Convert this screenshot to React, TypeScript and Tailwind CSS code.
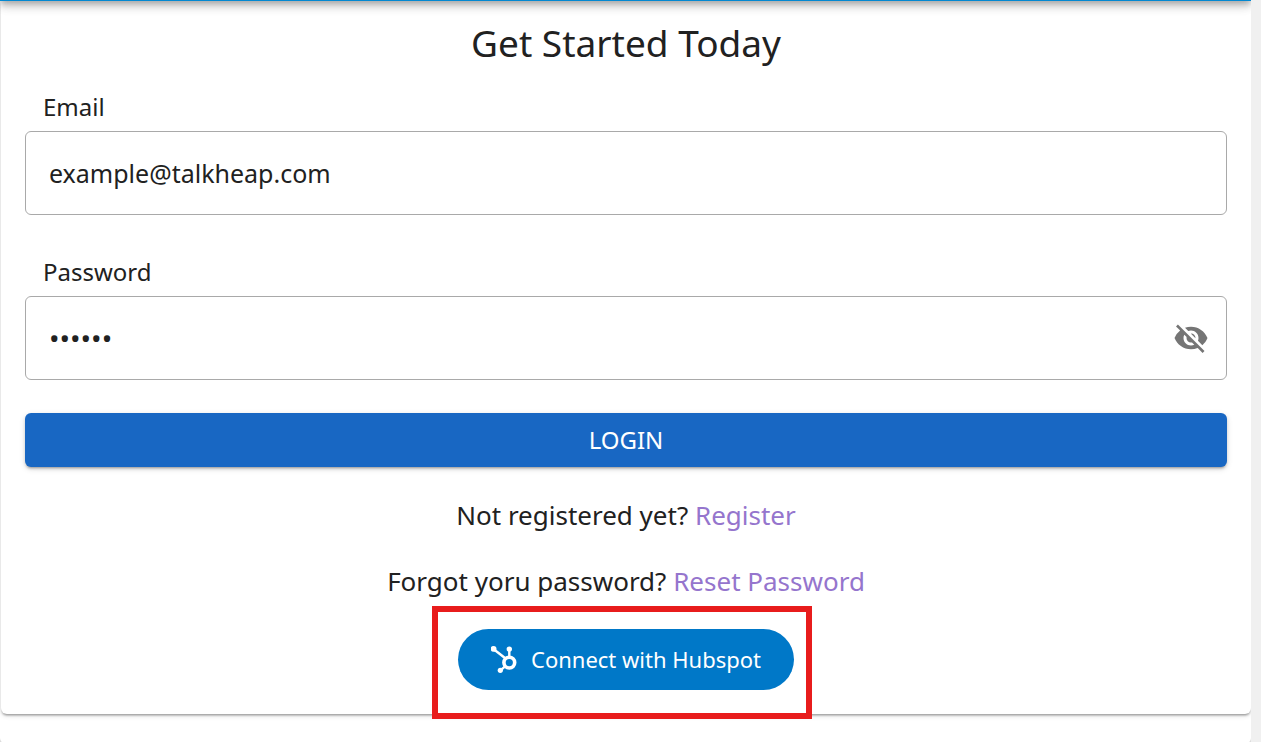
import { useState } from "react";
import { MdVisibility, MdVisibilityOff } from "react-icons/md";

const fieldClass =
  "h-21 w-full rounded-md border border-[#a9a9a9] bg-white pl-[23px] text-[#212121] outline-none focus:border-[#1976d2]";

const linkClass = "text-[#9575cd] hover:underline";

function HubspotIcon() {
  return (
    <svg width="28" height="28" viewBox="0 0 28 28" fill="none" stroke="currentColor" aria-hidden="true">
      <path d="M2.4 3 14 12M18.3 3v8M14.4 20.2l-5 4.2" strokeWidth="2.4" />
      <circle cx="18.3" cy="16.6" r="5.4" strokeWidth="3.6" />
      <g fill="currentColor" stroke="none">
        <circle cx="2.6" cy="2.9" r="2.9" />
        <circle cx="18.3" cy="3.1" r="2.7" />
        <circle cx="9.3" cy="24.3" r="2.6" />
      </g>
    </svg>
  );
}

export default function App() {
  const [visible, setVisible] = useState(false);

  return (
    <div className="flex h-screen overflow-hidden bg-white font-['Noto_Sans',sans-serif] text-[#212121]">
      <div className="min-w-0 flex-1 overflow-hidden">
        <header className="relative z-10 -mt-[95px] h-24 bg-[#0288d1] shadow-[0_3px_6px_-1px_rgba(0,0,0,0.2),0_6px_8px_0_rgba(0,0,0,0.14),0_1px_15px_0_rgba(0,0,0,0.12)]" />
        <main className="rounded-b-md pb-[30px] shadow-[0_3px_2px_-2px_rgba(0,0,0,0.2),0_2px_2px_0_rgba(0,0,0,0.14),0_2px_5px_0_rgba(0,0,0,0.12)]">
          <form
            className="ml-px flex flex-col rounded-b-md bg-white px-6 pt-[18px] pb-6 shadow-[0_3px_2px_-2px_rgba(0,0,0,0.2),0_2px_2px_0_rgba(0,0,0,0.14),0_2px_5px_0_rgba(0,0,0,0.12)]"
            onSubmit={(e) => e.preventDefault()}
          >
            <h1 className="text-center text-[37px] leading-12">Get Started Today</h1>

            <div className="mt-[22px] flex flex-col gap-1.5">
              <label htmlFor="email" className="ml-[18px] self-start text-2xl leading-9">
                Email
              </label>
              <input
                id="email"
                type="email"
                defaultValue="example@talkheap.com"
                className={`${fieldClass} pr-6 text-[25px]`}
              />
            </div>

            <div className="mt-[39px] flex flex-col gap-1.5">
              <label htmlFor="password" className="ml-[18px] self-start text-2xl leading-9">
                Password
              </label>
              <div className="relative">
                <input
                  id="password"
                  type={visible ? "text" : "password"}
                  defaultValue="secret"
                  className={`${fieldClass} pr-20 ${visible ? "text-[25px]" : "text-[28px]"}`}
                />
                <button
                  type="button"
                  aria-label={visible ? "Hide password" : "Show password"}
                  onClick={() => setVisible(!visible)}
                  className="absolute inset-y-0 right-0 flex items-center px-[18px] text-[#757575]"
                >
                  {visible ? <MdVisibility size={36} /> : <MdVisibilityOff size={36} />}
                </button>
              </div>
            </div>

            <button
              type="submit"
              className="mt-[33px] h-[54px] rounded-md bg-[#1867c3] text-2xl text-white shadow-[0_3px_2px_-2px_rgba(0,0,0,0.2),0_2px_3px_0_rgba(0,0,0,0.14),0_2px_6px_0_rgba(0,0,0,0.12)]"
            >
              LOGIN
            </button>

            <p className="mt-[30px] text-center text-[26px] leading-9">
              Not registered yet?{" "}
              <a href="#register" className={linkClass}>
                Register
              </a>
            </p>
            <p className="mt-[30px] text-center text-[26px] leading-9">
              Forgot yoru password?{" "}
              <a href="#reset" className={linkClass}>
                Reset Password
              </a>
            </p>

            <div className="relative mt-[30px] self-center">
              <button
                type="button"
                className="flex h-[61px] items-center gap-3 rounded-full bg-[#0078c8] px-[33px] text-[22px] text-white"
              >
                <HubspotIcon />
                Connect with Hubspot
              </button>
              <div className="pointer-events-none absolute -top-[23px] -right-[18px] -bottom-[29px] -left-[26px] border-6 border-[#e81c1c]" />
            </div>
          </form>
        </main>
      </div>
      <div className="w-2.5 shrink-0 bg-[#f0f0f0]" />
    </div>
  );
}
